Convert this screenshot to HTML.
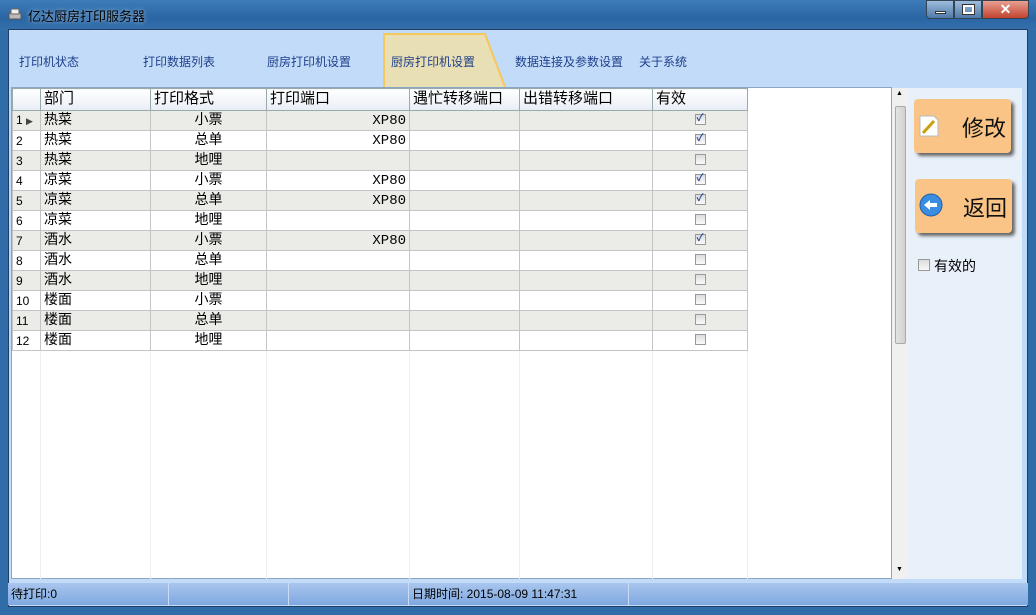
<!DOCTYPE html>
<html><head><meta charset="utf-8"><style>
*{margin:0;padding:0;box-sizing:border-box}
body{width:1036px;height:615px;overflow:hidden;background:#2f6ca8;font-family:"Liberation Sans","Noto Sans CJK SC",sans-serif;position:relative}
.abs{position:absolute}
#title{left:0;top:0;width:1036px;height:30px;background:linear-gradient(#3d7cb8,#2a66a3 60%,#3570ad)}
#title span{position:absolute;left:28px;top:6px;font-size:13px;color:#000;text-shadow:0 0 4px #bcd6f2}
#client{left:8px;top:29px;width:1020px;height:578px;background:#c2dbf9;border:1px solid #1e3f63}
.tab{position:absolute;top:53px;font-size:12px;color:#1e3f8a}
#grid{left:11px;top:87px;width:881px;height:492px;background:#fff;border:1px solid #8ba6c5}
table{border-collapse:collapse;font-family:"Liberation Mono","Noto Sans CJK SC",monospace;font-size:14px;position:absolute;left:0;top:0}
td{height:20px;border:1px solid #c4c4c4;padding:0 3px;white-space:nowrap;overflow:hidden;line-height:18px}
tr.h td{height:22px;background:linear-gradient(#fff,#e8edf5);border-color:#9aa;font-size:15px}
tr.g td{background:#ebece7}
td.rh{background:#fff;font-size:12px;font-family:"Liberation Sans",sans-serif;padding-left:3px}
td.c{text-align:center}
td.r{text-align:right}
.cb{display:inline-block;width:11px;height:11px;border:1px solid #999;background:linear-gradient(#dcdcdc,#fafafa);vertical-align:middle;font-size:10px;line-height:9px;color:#2a4c9c;text-align:center;font-weight:bold}
#vs{left:892px;top:88px;width:16px;height:491px;background:#f0f0f0}
#panel{left:908px;top:88px;width:114px;height:491px;background:#e8f0fa}
.btn{position:absolute;width:97px;height:54px;background:#f9c485;border-radius:4px;box-shadow:3px 3px 3px #666;font-size:22px;color:#111}
#status{left:8px;top:583px;width:1020px;height:22px;background:linear-gradient(#a9c6ee,#7fa8e0)}
#status div{position:absolute;top:0;height:22px;border-right:1px solid #c8dcf5;font-size:12px;line-height:22px;padding-left:3px;color:#000}
</style></head><body>
<div id="title" class="abs"><span>亿达厨房打印服务器</span>
<svg class="abs" style="left:7px;top:7px" width="16" height="16"><rect x="2" y="6" width="12" height="6" fill="#bbb" stroke="#555"/><rect x="4" y="2" width="8" height="5" fill="#eee" stroke="#666"/></svg>
<div class="abs" style="left:926px;top:0;width:28px;height:19px;border:1px solid #345;border-radius:0 0 0 4px;background:linear-gradient(#9fbcdb,#4f7aa8)"><div class="abs" style="left:8px;top:10px;width:11px;height:3px;background:#fff;border:1px solid #333"></div></div>
<div class="abs" style="left:954px;top:0;width:28px;height:19px;border:1px solid #345;background:linear-gradient(#9fbcdb,#4f7aa8)"><div class="abs" style="left:8px;top:4px;width:11px;height:9px;border:2px solid #fff;outline:1px solid #333"></div></div>
<div class="abs" style="left:982px;top:0;width:47px;height:19px;border:1px solid #345;border-radius:0 0 4px 0;background:linear-gradient(#e8a093,#c2442f);color:#fff;font-weight:bold;text-align:center;font-size:14px;line-height:17px">✕</div>
</div>
<div id="client" class="abs"></div>
<span class="tab" style="left:19px">打印机状态</span>
<span class="tab" style="left:143px">打印数据列表</span>
<span class="tab" style="left:267px">厨房打印机设置</span>
<svg class="abs" style="left:383px;top:33px" width="124" height="54"><path d="M1 54 V1 H102 L122 54" fill="#e9dfb4" stroke="#f5c85e" stroke-width="2"/></svg>
<span class="tab" style="left:391px">厨房打印机设置</span>
<span class="tab" style="left:515px">数据连接及参数设置</span>
<span class="tab" style="left:639px">关于系统</span>
<div id="grid" class="abs">
<table>
<colgroup><col style="width:28px"><col style="width:110px"><col style="width:116px"><col style="width:143px"><col style="width:110px"><col style="width:133px"><col style="width:95px"></colgroup>
<tr class="h"><td class="rh" style="background:linear-gradient(#fff,#e8edf5)"></td><td>部门</td><td>打印格式</td><td>打印端口</td><td>遇忙转移端口</td><td>出错转移端口</td><td>有效</td></tr>
<tr class="g"><td class="rh">1 <span style="font-size:9px;color:#444">▶</span></td><td>热菜</td><td class="c">小票</td><td class="r">XP80</td><td></td><td></td><td class="c"><span class="cb">✓</span></td></tr>
<tr><td class="rh">2</td><td>热菜</td><td class="c">总单</td><td class="r">XP80</td><td></td><td></td><td class="c"><span class="cb">✓</span></td></tr>
<tr class="g"><td class="rh">3</td><td>热菜</td><td class="c">地哩</td><td></td><td></td><td></td><td class="c"><span class="cb"></span></td></tr>
<tr><td class="rh">4</td><td>凉菜</td><td class="c">小票</td><td class="r">XP80</td><td></td><td></td><td class="c"><span class="cb">✓</span></td></tr>
<tr class="g"><td class="rh">5</td><td>凉菜</td><td class="c">总单</td><td class="r">XP80</td><td></td><td></td><td class="c"><span class="cb">✓</span></td></tr>
<tr><td class="rh">6</td><td>凉菜</td><td class="c">地哩</td><td></td><td></td><td></td><td class="c"><span class="cb"></span></td></tr>
<tr class="g"><td class="rh">7</td><td>酒水</td><td class="c">小票</td><td class="r">XP80</td><td></td><td></td><td class="c"><span class="cb">✓</span></td></tr>
<tr><td class="rh">8</td><td>酒水</td><td class="c">总单</td><td></td><td></td><td></td><td class="c"><span class="cb"></span></td></tr>
<tr class="g"><td class="rh">9</td><td>酒水</td><td class="c">地哩</td><td></td><td></td><td></td><td class="c"><span class="cb"></span></td></tr>
<tr><td class="rh">10</td><td>楼面</td><td class="c">小票</td><td></td><td></td><td></td><td class="c"><span class="cb"></span></td></tr>
<tr class="g"><td class="rh">11</td><td>楼面</td><td class="c">总单</td><td></td><td></td><td></td><td class="c"><span class="cb"></span></td></tr>
<tr><td class="rh">12</td><td>楼面</td><td class="c">地哩</td><td></td><td></td><td></td><td class="c"><span class="cb"></span></td></tr>
</table>
<div class="abs" style="left:28px;top:263px;width:1px;height:228px;background:#eee"></div>
<div class="abs" style="left:138px;top:263px;width:1px;height:228px;background:#eee"></div>
<div class="abs" style="left:254px;top:263px;width:1px;height:228px;background:#eee"></div>
<div class="abs" style="left:397px;top:263px;width:1px;height:228px;background:#eee"></div>
<div class="abs" style="left:507px;top:263px;width:1px;height:228px;background:#eee"></div>
<div class="abs" style="left:640px;top:263px;width:1px;height:228px;background:#eee"></div>
<div class="abs" style="left:735px;top:263px;width:1px;height:228px;background:#eee"></div>
</div>
<div id="vs" class="abs"><div class="abs" style="left:3px;top:18px;width:11px;height:238px;background:linear-gradient(90deg,#e4e4e4,#d0d0d0);border:1px solid #aaa;border-radius:2px"></div><span class="abs" style="left:4px;top:2px;font-size:7px">▲</span><span class="abs" style="left:4px;top:478px;font-size:7px">▼</span></div>
<div id="panel" class="abs">
<div class="btn" style="left:6px;top:11px"><svg class="abs" style="left:5px;top:16px" width="20" height="22"><path d="M1 1H15L19 5V21H1Z" fill="#fff" stroke="#bbb"/><path d="M4 18L15 6" stroke="#c9a010" stroke-width="3"/></svg><span class="abs" style="left:48px;top:12px">修改</span></div>
<div class="btn" style="left:7px;top:91px"><svg class="abs" style="left:4px;top:14px" width="24" height="24"><circle cx="12" cy="12" r="11" fill="#3a8de0" stroke="#1f5fa8"/><path d="M5 12L11 7V10H18V14H11V17Z" fill="#fff"/></svg><span class="abs" style="left:48px;top:12px">返回</span></div>
<span class="abs cb" style="left:10px;top:171px;width:12px;height:12px"></span><span class="abs" style="left:26px;top:168px;font-size:14px">有效的</span>
</div>
<div id="status" class="abs">
<div style="left:0;width:161px">待打印:0</div>
<div style="left:161px;width:120px"></div>
<div style="left:281px;width:120px"></div>
<div style="left:401px;width:220px">日期时间: 2015-08-09 11:47:31</div>
</div>
</body></html>
